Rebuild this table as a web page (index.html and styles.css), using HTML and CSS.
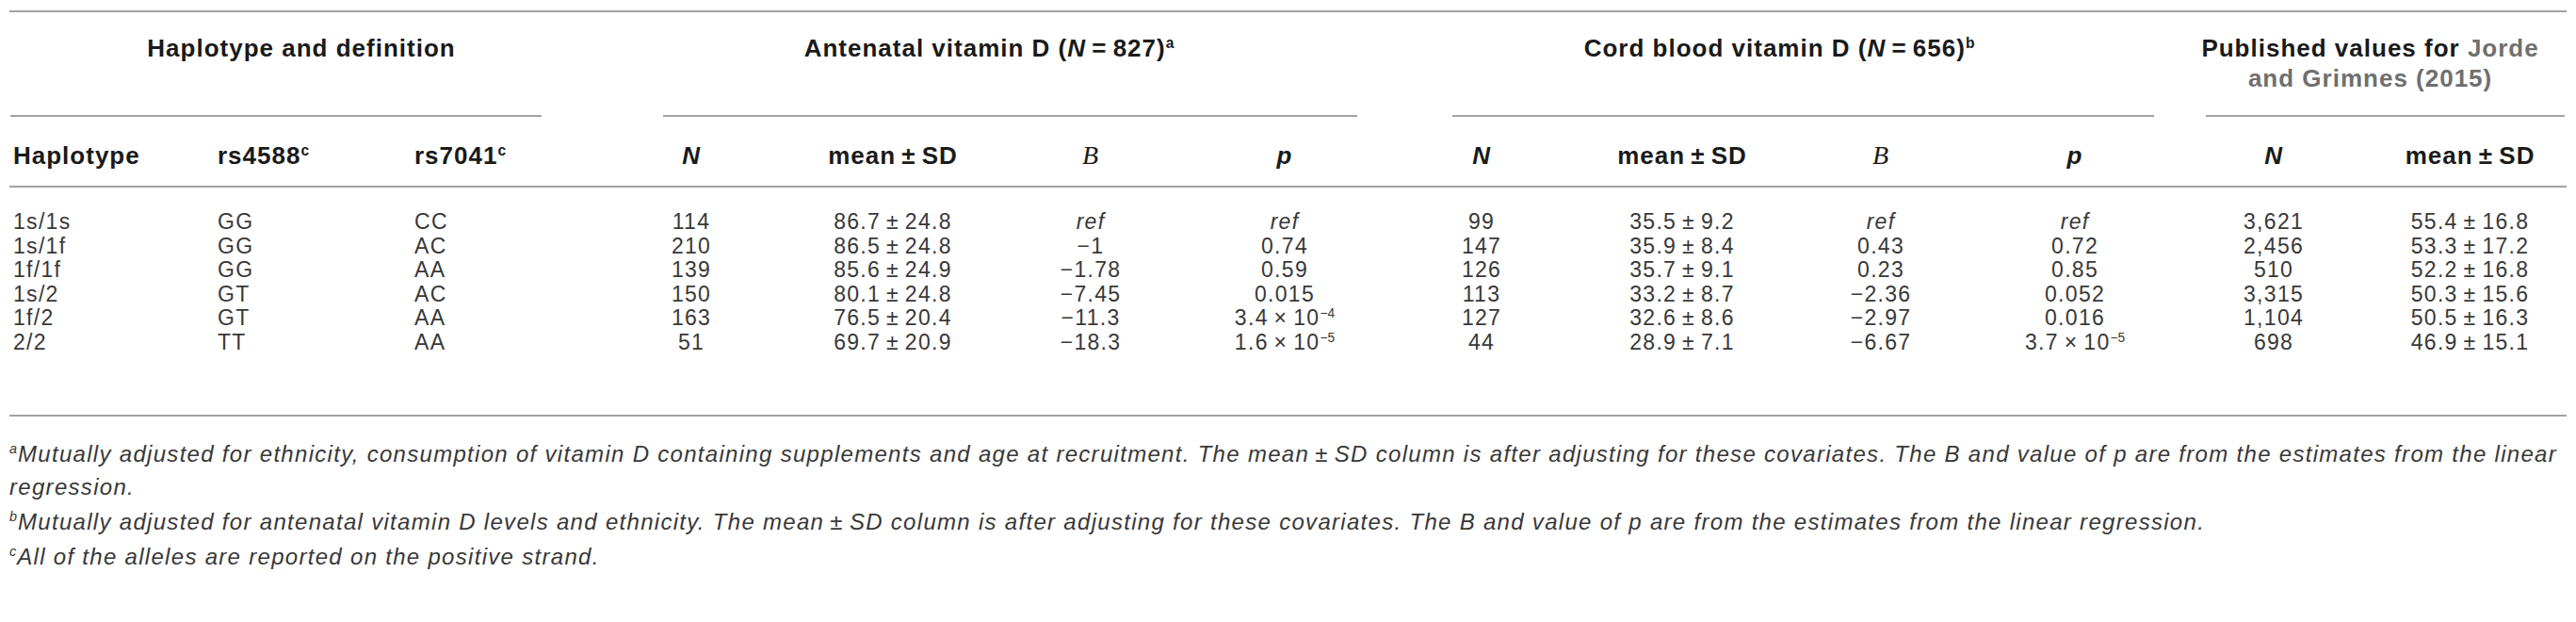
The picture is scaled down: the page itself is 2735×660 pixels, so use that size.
FILE: index.html
```html
<!DOCTYPE html>
<html lang="en">
<head>
  <meta charset="UTF-8" />
  <title>Vitamin D binding protein haplotypes</title>
  <link rel="stylesheet" href="styles.css">
</head>
<body>
  <div class="page">
    <table class="haplo">
      <colgroup>
        <col class="c-hap"><col class="c-rs1"><col class="c-rs2">
        <col class="c-n1"><col class="c-mean1"><col class="c-b1"><col class="c-p1">
        <col class="c-n2"><col class="c-mean2"><col class="c-b2"><col class="c-p2">
        <col class="c-n3"><col class="c-mean3">
      </colgroup>
      <thead>
        <tr class="groups">
          <th colspan="3" class="grp grp-hap"><div class="grp-label">Haplotype and definition</div></th>
          <th colspan="4" class="grp grp-ant"><div class="grp-label">Antenatal vitamin D (<i>N</i>&thinsp;=&thinsp;827)<sup>a</sup></div></th>
          <th colspan="4" class="grp grp-cord"><div class="grp-label">Cord blood vitamin D (<i>N</i>&thinsp;=&thinsp;656)<sup>b</sup></div></th>
          <th colspan="2" class="grp grp-pub"><div class="grp-label">Published values for <span class="cite">Jorde</span> <span class="cite">and Grimnes (2015)</span></div></th>
        </tr>
        <tr class="cols">
          <th class="left">Haplotype</th>
          <th class="left">rs4588<sup>c</sup></th>
          <th class="left">rs7041<sup>c</sup></th>
          <th><i>N</i></th>
          <th>mean&thinsp;±&thinsp;SD</th>
          <th><i class="serif">B</i></th>
          <th><i>p</i></th>
          <th><i>N</i></th>
          <th>mean&thinsp;±&thinsp;SD</th>
          <th><i class="serif">B</i></th>
          <th><i>p</i></th>
          <th><i>N</i></th>
          <th>mean&thinsp;±&thinsp;SD</th>
        </tr>
      </thead>
      <tbody>
        <tr>
          <td class="left">1s/1s</td><td class="left">GG</td><td class="left">CC</td>
          <td>114</td><td>86.7&thinsp;±&thinsp;24.8</td><td><i>ref</i></td><td><i>ref</i></td>
          <td>99</td><td>35.5&thinsp;±&thinsp;9.2</td><td><i>ref</i></td><td><i>ref</i></td>
          <td>3,621</td><td>55.4&thinsp;±&thinsp;16.8</td>
        </tr>
        <tr>
          <td class="left">1s/1f</td><td class="left">GG</td><td class="left">AC</td>
          <td>210</td><td>86.5&thinsp;±&thinsp;24.8</td><td>−1</td><td>0.74</td>
          <td>147</td><td>35.9&thinsp;±&thinsp;8.4</td><td>0.43</td><td>0.72</td>
          <td>2,456</td><td>53.3&thinsp;±&thinsp;17.2</td>
        </tr>
        <tr>
          <td class="left">1f/1f</td><td class="left">GG</td><td class="left">AA</td>
          <td>139</td><td>85.6&thinsp;±&thinsp;24.9</td><td>−1.78</td><td>0.59</td>
          <td>126</td><td>35.7&thinsp;±&thinsp;9.1</td><td>0.23</td><td>0.85</td>
          <td>510</td><td>52.2&thinsp;±&thinsp;16.8</td>
        </tr>
        <tr>
          <td class="left">1s/2</td><td class="left">GT</td><td class="left">AC</td>
          <td>150</td><td>80.1&thinsp;±&thinsp;24.8</td><td>−7.45</td><td>0.015</td>
          <td>113</td><td>33.2&thinsp;±&thinsp;8.7</td><td>−2.36</td><td>0.052</td>
          <td>3,315</td><td>50.3&thinsp;±&thinsp;15.6</td>
        </tr>
        <tr>
          <td class="left">1f/2</td><td class="left">GT</td><td class="left">AA</td>
          <td>163</td><td>76.5&thinsp;±&thinsp;20.4</td><td>−11.3</td><td>3.4&thinsp;×&thinsp;10<sup>−4</sup></td>
          <td>127</td><td>32.6&thinsp;±&thinsp;8.6</td><td>−2.97</td><td>0.016</td>
          <td>1,104</td><td>50.5&thinsp;±&thinsp;16.3</td>
        </tr>
        <tr>
          <td class="left">2/2</td><td class="left">TT</td><td class="left">AA</td>
          <td>51</td><td>69.7&thinsp;±&thinsp;20.9</td><td>−18.3</td><td>1.6&thinsp;×&thinsp;10<sup>−5</sup></td>
          <td>44</td><td>28.9&thinsp;±&thinsp;7.1</td><td>−6.67</td><td>3.7&thinsp;×&thinsp;10<sup>−5</sup></td>
          <td>698</td><td>46.9&thinsp;±&thinsp;15.1</td>
        </tr>
      </tbody>
    </table>

    <div class="notes">
      <p><sup>a</sup>Mutually adjusted for ethnicity, consumption of vitamin D containing supplements and age at recruitment. The mean&thinsp;±&thinsp;SD column is after adjusting for these covariates. The B and value of p are from the estimates from the linear regression.</p>
      <p><sup>b</sup>Mutually adjusted for antenatal vitamin D levels and ethnicity. The mean&thinsp;±&thinsp;SD column is after adjusting for these covariates. The B and value of p are from the estimates from the linear regression.</p>
      <p><sup>c</sup>All of the alleles are reported on the positive strand.</p>
    </div>
  </div>
</body>
</html>
```

FILE: styles.css
```css
:root {
  --rule: #a2a2a2;
  --head: #1a1a1a;
  --text: #383838;
  --cite: #6f6f6f;
}

body {
  margin: 0;
  background: #fff;
  color: var(--text);
  font-family: "Liberation Sans", Arial, sans-serif;
}

.page {
  padding: 11px 10px 0;
}

.haplo {
  width: 100%;
  table-layout: fixed;
  border-collapse: collapse;
  border-top: 2px solid var(--rule);
  border-bottom: 2px solid var(--rule);
  font-size: 23px;
  letter-spacing: 1.3px;
}

/* column widths */
.c-hap { width: 218px; }
.c-rs1 { width: 209px; }
.c-rs2 { width: 193px; }
.c-n1 { width: 208px; }
.c-mean1 { width: 220px; }
.c-b1 { width: 200px; }
.c-p1 { width: 212px; }
.c-n2 { width: 206px; }
.c-mean2 { width: 220px; }
.c-b2 { width: 202px; }
.c-p2 { width: 210px; }
.c-n3 { width: 212px; }
.c-mean3 { width: 205px; }

th {
  color: var(--head);
  font-size: 26px;
  font-weight: bold;
  letter-spacing: 1px;
}

sup {
  font-size: 60%;
  line-height: 0;
  letter-spacing: 0;
  vertical-align: 0.6em;
}

/* group headers: label centred on the span, rule inset */
.groups th {
  padding: 0;
  vertical-align: top;
}

.grp-label {
  height: 109px;
  box-sizing: border-box;
  padding-top: 22px;
  line-height: 32px;
  text-align: center;
}

.grp::after {
  content: "";
  display: block;
  border-top: 2px solid var(--rule);
}

.grp-hap::after { margin: 0 55px 0 1px; }
.grp-ant::after { margin: 0 29px 0 74px; }
.grp-cord::after { margin: 0 21px 0 72px; }
.grp-pub::after { margin: 0 2px 0 34px; }
.grp-pub .grp-label { padding-left: 20px; padding-right: 20px; }

.cite {
  color: var(--cite);
}

.cols th {
  padding: 25px 0 16px;
  line-height: 32px;
  text-align: center;
  border-bottom: 2px solid var(--rule);
}

.serif {
  font-family: "Liberation Serif", "Times New Roman", serif;
  font-size: 28px;
  font-weight: normal;
}

td {
  padding: 0;
  line-height: 25.6px;
  text-align: center;
  white-space: nowrap;
}

tbody tr:first-child td {
  padding-top: 24px;
}

tbody tr:last-child td {
  padding-bottom: 63px;
}

th.left,
td.left {
  text-align: left;
}

.cols th:first-child,
tbody td:first-child {
  padding-left: 4px;
}

.cols th:nth-child(2),
.cols th:nth-child(3),
tbody td:nth-child(2),
tbody td:nth-child(3) {
  padding-left: 3px;
}

.notes {
  padding-top: 22px;
  font-style: italic;
  font-size: 24px;
  letter-spacing: 1.3px;
  line-height: 35px;
}

.notes p {
  margin: 0 0 2px;
}

.notes sup {
  margin-right: 1px;
}
```
